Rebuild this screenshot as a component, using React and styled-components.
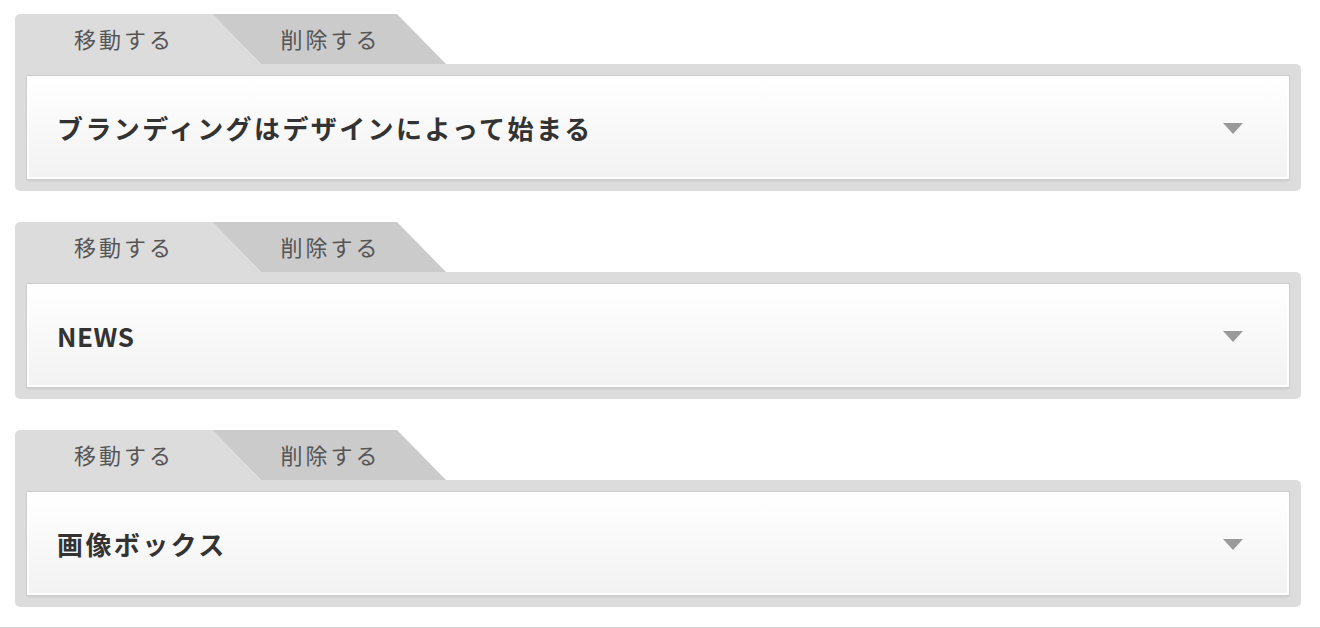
import React from 'react'
import styled, { createGlobalStyle } from 'styled-components'

const GlobalStyle = createGlobalStyle`
    html, body {
        margin: 0;
        padding: 0;
        background: #fff;
        font-family: "Noto Sans CJK JP", "Noto Sans", sans-serif;
    }
`;

const Page = styled.div`
    display: flex;
    flex-direction: column;
    gap: 31px;
    padding: 14px 19px 20px 15px;
    border-bottom: 1px solid #cfcfcf;
`;

const Block = styled.section`
    display: flex;
    flex-direction: column;
`;

const TabRow = styled.div`
    display: flex;
    height: 50px;
`;

const Tab = styled.button`
    position: relative;
    height: 50px;
    border: none;
    margin: 0;
    padding: 0 0 2px;
    font-family: inherit;
    font-size: 22px;
    letter-spacing: 3px;
    color: #555;
    line-height: 48px;
    text-align: center;
    cursor: pointer;
    background: ${({ $primary }) => ($primary ? '#dcdcdc' : '#cbcbcb')};
    z-index: ${({ $primary }) => ($primary ? 2 : 1)};
    width: ${({ $primary }) => ($primary ? '246px' : '234px')};
    margin-left: ${({ $primary }) => ($primary ? '0' : '-49px')};
    padding-right: ${({ $primary }) => ($primary ? '28px' : '0')};
    padding-left: ${({ $primary }) => ($primary ? '0' : '3px')};
    border-top-left-radius: ${({ $primary }) => ($primary ? '5px' : '0')};
    clip-path: ${({ $primary }) =>
        $primary
            ? 'polygon(0 0, 197px 0, 100% 100%, 0 100%)'
            : 'polygon(0 0, 185px 0, 100% 100%, 49px 100%)'};
`;

const Panel = styled.div`
    background: #dcdcdc;
    padding: 12px;
    border-radius: 0 5px 5px 5px;
`;

const Header = styled.div`
    box-sizing: border-box;
    height: 103px;
    display: flex;
    align-items: center;
    justify-content: space-between;
    padding: 0 44px 0 28px;
    border: 2px solid #fff;
    background: linear-gradient(to bottom, #ffffff, #f2f2f2);
    box-shadow: 0 0 0 1px #cdcdcd, 0 2px 2px rgba(0, 0, 0, 0.08);
`;

const Title = styled.h2`
    margin: 0;
    font-size: 26px;
    letter-spacing: ${({ $latin }) => ($latin ? '0.5px' : '2.4px')};
    font-weight: ${({ $latin }) => ($latin ? 600 : 700)};
    color: #333;
`;

const Arrow = styled.span`
    width: 0;
    height: 0;
    border-left: 10px solid transparent;
    border-right: 10px solid transparent;
    border-top: 11px solid #9a9a9a;
    margin-top: 2px;
`;

const items = [
    'ブランディングはデザインによって始まる',
    'NEWS',
    '画像ボックス',
];

const App = () => {
    return (
        <>
            <GlobalStyle />
            <Page>
                {items.map((title, index) => (
                    <Block key={index}>
                        <TabRow>
                            <Tab $primary>移動する</Tab>
                            <Tab>削除する</Tab>
                        </TabRow>
                        <Panel>
                            <Header>
                                <Title $latin={/^[\x00-\x7f]+$/.test(title)}>{title}</Title>
                                <Arrow />
                            </Header>
                        </Panel>
                    </Block>
                ))}
            </Page>
        </>
    )
}

export default App
